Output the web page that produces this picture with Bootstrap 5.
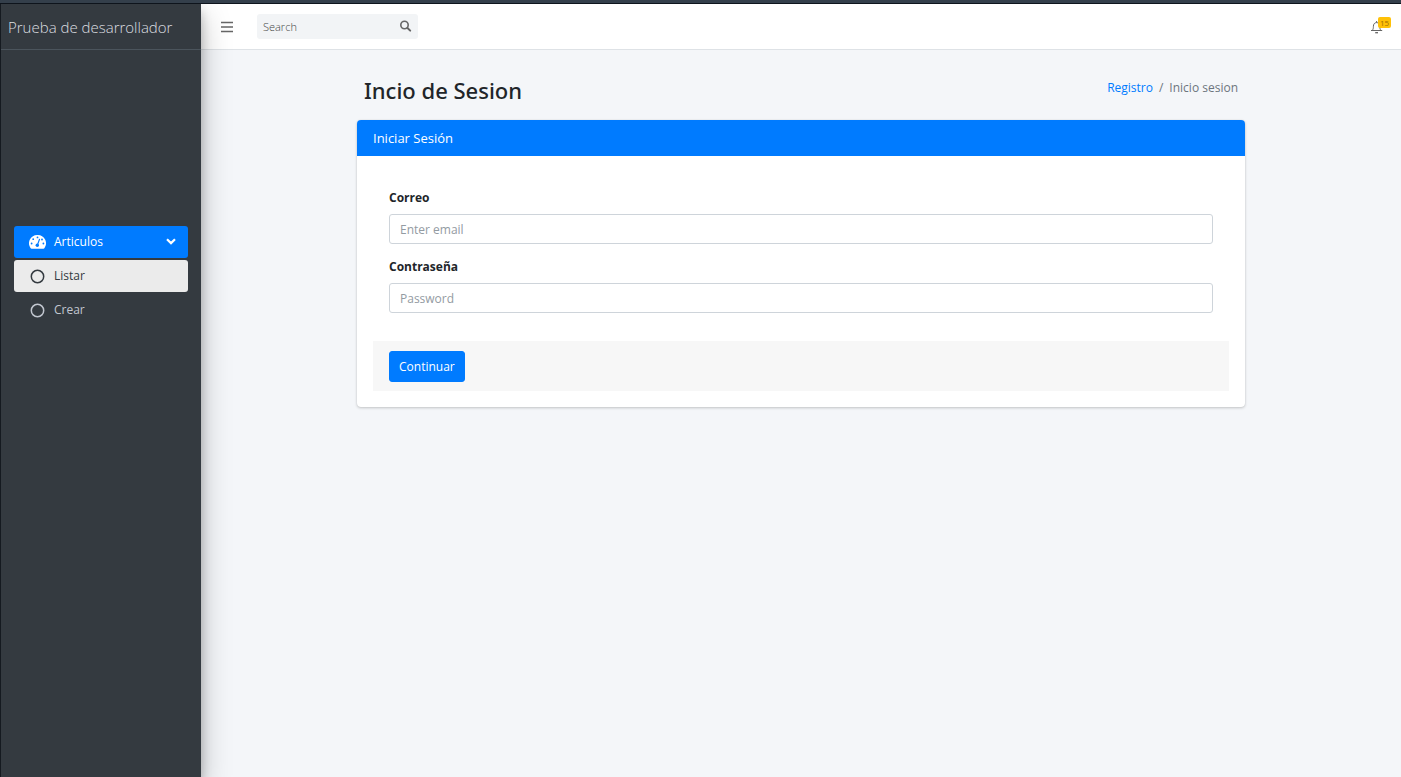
<!DOCTYPE html>
<html lang="es">
<head>
<meta charset="utf-8">
<meta name="viewport" content="width=device-width, initial-scale=1">
<title>Prueba de desarrollador</title>
<link href="https://cdn.jsdelivr.net/npm/bootstrap@5.3.0/dist/css/bootstrap.min.css" rel="stylesheet">
<style>
  :root { --app-blue: #007bff; --app-dark: #343a40; }
  body { font: 400 12px/20px "Open Sans", "Noto Sans", sans-serif; color: #212529; background: #f4f6f9; }
  .window-edge { height: 4px; background: #343f4b; border-bottom: 1px solid #0e141c; }
  .app-shell { min-height: calc(100vh - 4px); }
  .app-sidebar { width: 201px; flex: none; background: var(--app-dark); border-left: 1px solid #151a20; box-shadow: 0 12px 28px rgba(0,0,0,.25), 0 8px 10px rgba(0,0,0,.22); z-index: 2; clip-path: inset(0 -40px 0 0); }
  .app-brand { height: 46px; padding: 0 7px; font-size: 15px; font-weight: 300; color: #dcdfe1; border-bottom: 1px solid #4b545c; white-space: nowrap; }
  .app-menu { margin-top: 176px; padding: 0 13px; gap: 2px; }
  .app-menu .nav-link { height: 32px; padding: 0 12px 0 15px; gap: 8px; font-size: 12px; color: #c2c7d0; border-radius: 3px; }
  .app-menu .nav-link.active { background: var(--app-blue); color: #fff; }
  .app-menu .nav-link.chosen { background: #ebebeb; color: var(--app-dark); }
  .app-topbar { height: 46px; background: #fff; border-bottom: 1px solid #dee2e6; padding: 0 9px 0 18px; }
  .icon-btn { border: 0; background: none; padding: 0; color: #666; display: flex; }
  .search-box { width: 161px; height: 25px; margin-left: 24px; background: #f2f4f6; border-radius: 3px; padding: 0 6px; }
  .search-box input { border: 0; background: none; min-width: 0; flex: 1; padding: 0; font-size: 11px; outline: 0; }
  .search-box input::placeholder { color: #444; font-weight: 300; opacity: 1; }
  .bell-badge { top: -3px; left: 8px; width: 13px; height: 11px; padding: 0; font-size: 8px; font-weight: 400; line-height: 11px; background: #ffc107; color: #a06f00; border-radius: 2px; }
  .page-column { width: 74%; }
  .page-head { padding: 24px 7px 14px; }
  .page-head h1 { font-size: 22px; line-height: 32px; font-weight: 500; font-family: "Noto Sans", "Open Sans", sans-serif; }
  .page-head .breadcrumb { --bs-breadcrumb-item-padding-x: 6px; --bs-breadcrumb-divider-color: #6c757d; --bs-breadcrumb-item-active-color: #6c757d; font-size: 12px; margin-top: 4px; }
  .page-head a { color: var(--app-blue); }
  .login-card { border: 0; border-radius: 4px; box-shadow: 0 0 1px rgba(0,0,0,.13), 0 1px 3px rgba(0,0,0,.2); }
  .login-card > .card-header { height: 36px; padding: 8px 16px; background: var(--app-blue); color: #fff; border: 0; border-radius: 4px 4px 0 0; }
  .login-card .card-header h2 { font-size: 13px; line-height: 20px; }
  .login-card label { font-size: 12px; line-height: 20px; font-weight: 700; margin-bottom: 6px; }
  .login-card .form-control { height: 30px; padding: 0 10px; font-size: 12px; border-color: #ced4da; border-radius: 3px; }
  .login-card .form-control::placeholder { color: #939ba2; }
  .form-fields { display: grid; gap: 13px; padding: 16px 16px 28px; }
  .form-actions { background: #f7f7f7; padding: 10px 16px 9px; }
  .form-actions .btn { height: 31px; padding: 0 9px; font-size: 12px; background: var(--app-blue); border-color: var(--app-blue); border-radius: 3px; }
</style>
</head>
<body>
<div class="window-edge"></div>
<div class="app-shell d-flex">
  <aside class="app-sidebar position-relative">
    <div class="app-brand d-flex align-items-center">Prueba de desarrollador</div>
    <nav class="app-menu nav flex-column">
      <a href="#" class="nav-link active d-flex align-items-center">
        <svg width="17" height="14" viewBox="0 0 17 14" aria-hidden="true"><path fill="#fff" d="M8.500 0A8.300 8.300 0 0 0 1.500 13q.4.700 1.100.7h11.800q.7 0 1.100-.7A8.300 8.300 0 0 0 8.500 0z"/><g fill="#007bff"><circle cx="8.500" cy="2.400" r=".9"/><circle cx="4.200" cy="4.200" r=".9"/><circle cx="2.600" cy="8.500" r=".9"/><circle cx="14.400" cy="8.500" r=".9"/><circle cx="13" cy="4.500" r=".9"/><circle cx="8.300" cy="10.300" r="1.700"/></g><path stroke="#007bff" stroke-width="1.100" stroke-linecap="round" d="M8.600 9.500l1.900-5.300"/></svg>
        <span>Articulos</span>
        <svg class="ms-auto" width="10" height="9" viewBox="0 0 10 9" fill="none" stroke="#fff" stroke-width="2.200" aria-hidden="true"><path d="M1 1.200l4 3.900 4-3.900"/></svg>
      </a>
      <a href="#" class="nav-link chosen d-flex align-items-center">
        <svg width="17" height="16" viewBox="0 0 17 16" fill="none" stroke="currentColor" stroke-width="1.500" aria-hidden="true"><circle cx="8.500" cy="8.500" r="6.200"/></svg>
        <span>Listar</span>
      </a>
      <a href="#" class="nav-link d-flex align-items-center">
        <svg width="17" height="16" viewBox="0 0 17 16" fill="none" stroke="currentColor" stroke-width="1.500" aria-hidden="true"><circle cx="8.500" cy="8.500" r="6.200"/></svg>
        <span>Crear</span>
      </a>
    </nav>
  </aside>
  <div class="flex-grow-1">
    <header class="app-topbar d-flex align-items-center">
      <button class="icon-btn" type="button" aria-label="Menu"><svg width="14" height="12" viewBox="0 0 14 12" stroke="currentColor" stroke-width="1.700"><path d="M2 1.500h12M2 6h12M2 10.500h12"/></svg></button>
      <form class="search-box d-flex align-items-center">
        <input type="search" placeholder="Search" aria-label="Search">
        <button class="icon-btn" type="button" aria-label="Search"><svg width="13" height="13" viewBox="0 0 13 13" fill="none" stroke="currentColor"><circle cx="5.500" cy="5" r="3.700" stroke-width="1.600"/><path stroke-width="2" stroke-linecap="round" d="M8.500 8l2.700 2.600"/></svg></button>
      </form>
      <button class="icon-btn position-relative ms-auto me-2" type="button" aria-label="Notifications">
        <svg width="14" height="14" viewBox="0 0 14 14" fill="none" stroke="currentColor"><path d="M1 10.500h11.200M2.200 10.500c1-1.200 1.200-2.300 1.200-4.200 0-2.200 1.200-3.700 3.200-3.700s3.200 1.500 3.200 3.700c0 1.900.2 3 1.200 4.200M6.600 1v1.500"/><path stroke-width="1.300" d="M5.200 12.700h2.800"/></svg>
        <span class="bell-badge badge position-absolute">15</span>
      </button>
    </header>
    <main class="page-column mx-auto">
      <div class="page-head d-flex justify-content-between align-items-start">
        <h1 class="m-0">Incio de Sesion</h1>
        <nav aria-label="breadcrumb">
          <ol class="breadcrumb mb-0">
            <li class="breadcrumb-item"><a href="#" class="text-decoration-none">Registro</a></li>
            <li class="breadcrumb-item active" aria-current="page">Inicio sesion</li>
          </ol>
        </nav>
      </div>
      <section class="card login-card">
        <div class="card-header"><h2 class="m-0 fw-normal">Iniciar Sesión</h2></div>
        <form class="card-body">
          <div class="form-fields">
            <div>
              <label for="correo" class="d-block">Correo</label>
              <input id="correo" type="email" class="form-control" placeholder="Enter email">
            </div>
            <div>
              <label for="clave" class="d-block">Contraseña</label>
              <input id="clave" type="password" class="form-control" placeholder="Password">
            </div>
          </div>
          <div class="form-actions"><button type="button" class="btn btn-primary">Continuar</button></div>
        </form>
      </section>
    </main>
  </div>
</div>
<script src="https://cdn.jsdelivr.net/npm/bootstrap@5.3.0/dist/js/bootstrap.bundle.min.js"></script>
</body>
</html>
